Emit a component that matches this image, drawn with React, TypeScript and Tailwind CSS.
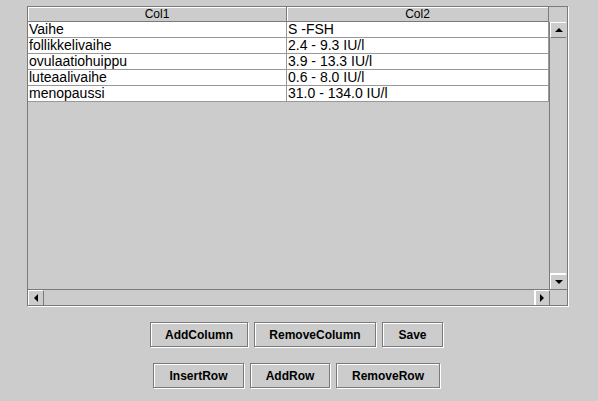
const ROWS = [
  ['Vaihe', 'S -FSH'],
  ['follikkelivaihe', '2.4 - 9.3 IU/l'],
  ['ovulaatiohuippu', '3.9 - 13.3 IU/l'],
  ['luteaalivaihe', '0.6 - 8.0 IU/l'],
  ['menopaussi', '31.0 - 134.0 IU/l'],
]

const font = { fontFamily: '"Liberation Sans", Arial, sans-serif' }

function Arrow({ dir }: { dir: 'up' | 'down' | 'left' | 'right' }) {
  const pts = {
    up: '0,4 4,0 8,4',
    down: '0,0 8,0 4,4',
    left: '4,0 4,8 0,4',
    right: '0,0 4,4 0,8',
  }[dir]
  const horiz = dir === 'left' || dir === 'right'
  return (
    <svg width={horiz ? 4 : 8} height={horiz ? 8 : 4} viewBox={horiz ? '0 0 4 8' : '0 0 8 4'}>
      <polygon points={pts} fill="#000" />
    </svg>
  )
}

function ScrollButton({ dir, className }: { dir: 'up' | 'down' | 'left' | 'right'; className: string }) {
  return (
    <div className={`flex items-center justify-center bg-[#cccccc] border-t border-l border-t-white border-l-white ${className}`}>
      <Arrow dir={dir} />
    </div>
  )
}

function Btn({ label, w }: { label: string; w: string }) {
  return (
    <button
      className={`${w} h-[25px] border border-[#7a7a7a] bg-[#cccccc] shadow-[inset_1px_1px_0_#fff,1px_1px_0_#fff] text-[12px] font-bold text-[#000] leading-none`}
    >
      {label}
    </button>
  )
}

export default function App() {
  return (
    <div className="w-[598px] h-[401px] bg-[#cccccc] overflow-hidden pt-[6px]" style={font}>
      {/* scroll pane */}
      <div className="ml-[27px] w-[541px] h-[300px] border border-[#7a7a7a] shadow-[1px_1px_0_#fff] flex flex-col">
        <div className="flex flex-1 min-h-0">
          {/* header + viewport */}
          <div className="flex flex-col w-[521px]">
            <div className="flex h-[15px] bg-[#cccccc] text-[12px] leading-[14px] text-black">
              <div className="w-[259px] text-center border-r border-b border-[#7a7a7a] shadow-[inset_1px_1px_0_#fff]">Col1</div>
              <div className="w-[262px] text-center border-r border-b border-[#7a7a7a] shadow-[inset_1px_1px_0_#fff]">Col2</div>
            </div>
            <div className="flex-1">
              {ROWS.map((r, i) => (
                <div key={i} className="flex h-[16px] bg-white text-[14px] leading-[15px] text-black">
                  <div className="w-[259px] pl-[1px] border-r border-b border-[#999999] whitespace-nowrap overflow-hidden">{r[0]}</div>
                  <div className="w-[262px] pl-[1px] border-r border-b border-[#999999] whitespace-nowrap overflow-hidden">{r[1]}</div>
                </div>
              ))}
            </div>
          </div>
          {/* vertical scrollbar */}
          <div className="flex flex-col w-[17px]">
            <div className="h-[15px] bg-[#cccccc]" />
            <div className="flex-1 flex flex-col border-l border-[#7a7a7a]">
              <ScrollButton dir="up" className="h-[16px] border-b border-b-[#7a7a7a]" />
              <div className="flex-1 bg-[#cccccc]" />
              <ScrollButton dir="down" className="h-[16px] border-t-[#7a7a7a] shadow-[inset_0_1px_0_#fff]" />
            </div>
          </div>
        </div>
        {/* horizontal scrollbar */}
        <div className="flex h-[16px] border-t border-[#7a7a7a]">
          <ScrollButton dir="left" className="w-[16px] border-r border-r-[#7a7a7a]" />
          <div className="w-[490px] bg-[#cccccc]" />
          <ScrollButton dir="right" className="w-[16px] border-l-[#7a7a7a] shadow-[inset_1px_0_0_#fff] border-r border-r-[#7a7a7a]" />
          <div className="flex-1 bg-[#cccccc]" />
        </div>
      </div>

      {/* buttons */}
      <div className="w-[593px] mt-[16px] flex flex-col gap-[16px]">
        <div className="flex justify-center gap-[6px]">
          <Btn label="AddColumn" w="w-[98px]" />
          <Btn label="RemoveColumn" w="w-[122px]" />
          <Btn label="Save" w="w-[61px]" />
        </div>
        <div className="flex justify-center gap-[6px]">
          <Btn label="InsertRow" w="w-[91px]" />
          <Btn label="AddRow" w="w-[80px]" />
          <Btn label="RemoveRow" w="w-[104px]" />
        </div>
      </div>
    </div>
  )
}
